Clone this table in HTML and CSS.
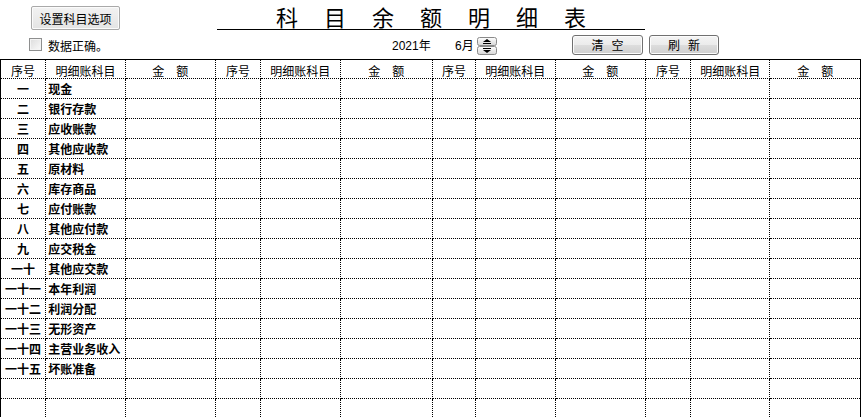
FILE: index.html
```html
<!DOCTYPE html>
<html lang="zh">
<head>
<meta charset="utf-8">
<title>科目余额明细表</title>
<link rel="stylesheet" href="styles.css">
</head>
<body>
<div class="page">
  <div class="top-row">
    <button class="btn-classic">设置科目选项</button>
    <div class="title">科目余额明细表</div>
  </div>
  <div class="second-row">
    <div class="check-wrap"><span class="checkbox"></span><span class="check-label">数据正确。</span></div>
    <div class="year">2021年</div>
    <div class="month">6月</div>
    <div class="spin-cell">
      <span class="spinner">
        <svg width="20" height="18" viewBox="0 0 20 18">
          <defs>
            <linearGradient id="g" x1="0" y1="0" x2="0" y2="1">
              <stop offset="0" stop-color="#ffffff"/>
              <stop offset="1" stop-color="#d6d6d6"/>
            </linearGradient>
          </defs>
          <rect x="0.5" y="0.5" width="19" height="8" rx="2" fill="url(#g)" stroke="#8a8a8a"/>
          <rect x="0.5" y="9.5" width="19" height="8" rx="2" fill="url(#g)" stroke="#8a8a8a"/>
          <path d="M6 5 L10 2 L14 5 Z" fill="#000"/>
          <rect x="6" y="6" width="8" height="1" fill="#000"/>
          <rect x="6" y="11" width="8" height="1" fill="#000"/>
          <path d="M6 13 L10 16 L14 13 Z" fill="#000"/>
        </svg>
      </span>
    </div>
    <div class="btn-cell"><button class="btn-modern btn-clear">清&nbsp;&nbsp;&nbsp;空</button></div>
    <div class="btn-cell"><button class="btn-modern btn-refresh">刷&nbsp;&nbsp;&nbsp;新</button></div>
  </div>
  <table class="grid">
    <colgroup>
      <col class="c-no"><col class="c-name"><col class="c-amt">
      <col class="c-no"><col class="c-name"><col class="c-amt2">
      <col class="c-no2"><col class="c-name"><col class="c-amt">
      <col class="c-no"><col class="c-name"><col class="c-amt">
    </colgroup>
    <thead>
      <tr>
        <th>序号</th><th>明细账科目</th><th>金&emsp;额</th>
        <th>序号</th><th>明细账科目</th><th>金&emsp;额</th>
        <th>序号</th><th>明细账科目</th><th>金&emsp;额</th>
        <th>序号</th><th>明细账科目</th><th>金&emsp;额</th>
      </tr>
    </thead>
    <tbody>
      <tr><td class="no">一</td><td class="name">现金</td><td></td><td></td><td></td><td></td><td></td><td></td><td></td><td></td><td></td><td></td></tr>
      <tr><td class="no">二</td><td class="name">银行存款</td><td></td><td></td><td></td><td></td><td></td><td></td><td></td><td></td><td></td><td></td></tr>
      <tr><td class="no">三</td><td class="name">应收账款</td><td></td><td></td><td></td><td></td><td></td><td></td><td></td><td></td><td></td><td></td></tr>
      <tr><td class="no">四</td><td class="name">其他应收款</td><td></td><td></td><td></td><td></td><td></td><td></td><td></td><td></td><td></td><td></td></tr>
      <tr><td class="no">五</td><td class="name">原材料</td><td></td><td></td><td></td><td></td><td></td><td></td><td></td><td></td><td></td><td></td></tr>
      <tr><td class="no">六</td><td class="name">库存商品</td><td></td><td></td><td></td><td></td><td></td><td></td><td></td><td></td><td></td><td></td></tr>
      <tr><td class="no">七</td><td class="name">应付账款</td><td></td><td></td><td></td><td></td><td></td><td></td><td></td><td></td><td></td><td></td></tr>
      <tr><td class="no">八</td><td class="name">其他应付款</td><td></td><td></td><td></td><td></td><td></td><td></td><td></td><td></td><td></td><td></td></tr>
      <tr><td class="no">九</td><td class="name">应交税金</td><td></td><td></td><td></td><td></td><td></td><td></td><td></td><td></td><td></td><td></td></tr>
      <tr><td class="no">一十</td><td class="name">其他应交款</td><td></td><td></td><td></td><td></td><td></td><td></td><td></td><td></td><td></td><td></td></tr>
      <tr><td class="no">一十一</td><td class="name">本年利润</td><td></td><td></td><td></td><td></td><td></td><td></td><td></td><td></td><td></td><td></td></tr>
      <tr><td class="no">一十二</td><td class="name">利润分配</td><td></td><td></td><td></td><td></td><td></td><td></td><td></td><td></td><td></td><td></td></tr>
      <tr><td class="no">一十三</td><td class="name">无形资产</td><td></td><td></td><td></td><td></td><td></td><td></td><td></td><td></td><td></td><td></td></tr>
      <tr><td class="no">一十四</td><td class="name">主营业务收入</td><td></td><td></td><td></td><td></td><td></td><td></td><td></td><td></td><td></td><td></td></tr>
      <tr><td class="no">一十五</td><td class="name">坏账准备</td><td></td><td></td><td></td><td></td><td></td><td></td><td></td><td></td><td></td><td></td></tr>
      <tr><td></td><td></td><td></td><td></td><td></td><td></td><td></td><td></td><td></td><td></td><td></td><td></td></tr>
      <tr><td></td><td></td><td></td><td></td><td></td><td></td><td></td><td></td><td></td><td></td><td></td><td></td></tr>
      <tr><td></td><td></td><td></td><td></td><td></td><td></td><td></td><td></td><td></td><td></td><td></td><td></td></tr>
    </tbody>
  </table>
</div>
</body>
</html>
```

FILE: styles.css
```css
html, body {
  margin: 0;
  padding: 0;
  background: #ffffff;
  overflow: hidden;
}
body {
  font-family: "Liberation Sans", "Noto Sans CJK SC", sans-serif;
  font-size: 12px;
  color: #000;
}
.page {
  width: 861px;
  height: 417px;
  overflow: hidden;
}
.top-row {
  display: flex;
  align-items: flex-start;
  height: 30px;
}
.btn-classic {
  margin: 6px 0 0 31px;
  width: 89px;
  height: 24px;
  padding: 0;
  font-family: "Noto Sans CJK SC", sans-serif;
  font-size: 12px;
  color: #000;
  background: linear-gradient(#f2f2f2, #e4e4e4);
  border: 1px solid #a9a9a9;
  border-radius: 2px;
  box-shadow: inset 0 0 0 1px #fbfbfb;
}
.title {
  margin-left: 97px;
  width: 428px;
  height: 30px;
  box-sizing: border-box;
  border-bottom: 1px solid #000;
  text-align: center;
  font-family: "Noto Sans CJK SC", sans-serif;
  font-size: 22px;
  line-height: 32px;
  letter-spacing: 26px;
  padding-left: 26px;
  white-space: nowrap;
}
.second-row {
  display: grid;
  grid-template-columns: 392px 63px 22px 95px 77px 1fr;
  align-items: center;
  height: 29px;
}
.check-wrap {
  display: flex;
  align-items: center;
  padding-left: 29px;
}
.checkbox {
  width: 11px;
  height: 11px;
  border: 1px solid #8e8f8f;
  background: linear-gradient(135deg, #dcdcdc, #fafafa);
  box-shadow: inset 0 0 0 1px #f4f4f4;
}
.check-label {
  margin-left: 6px;
  font-family: "Noto Sans CJK SC", sans-serif;
  font-size: 12px;
  line-height: 14px;
  margin-top: 2px;
}
.year, .month {
  font-size: 12px;
  line-height: 14px;
  margin-top: 3px;
}
.spin-cell {
  display: flex;
  align-items: center;
  padding-top: 2px;
}
.spinner {
  display: block;
  width: 20px;
  height: 18px;
}
.spinner svg {
  display: block;
}
.btn-cell {
  display: flex;
  align-items: center;
}
.btn-modern {
  width: 71px;
  height: 20px;
  padding: 0;
  font-family: "Noto Sans CJK SC", sans-serif;
  font-size: 12px;
  line-height: 16px;
  color: #000;
  background: linear-gradient(#f4f4f4 0%, #ebebeb 50%, #dddddd 51%, #cfcfcf 100%);
  border: 1px solid #707070;
  border-radius: 3px;
  box-shadow: inset 0 0 0 1px #fcfcfc;
}
.btn-refresh {
  width: 70px;
}
.grid {
  border-collapse: collapse;
  table-layout: fixed;
  width: 861px;
  border-top: 1px solid #000;
  border-left: 1px solid #000;
  border-right: 1px solid #000;
}
.c-no { width: 45px; }
.c-no2 { width: 43px; }
.c-name { width: 79px; }
.c-amt { width: 90px; }
.c-amt2 { width: 92px; }
.grid th, .grid td {
  border-right: 1px dotted #000;
  border-bottom: 1px dotted #000;
  padding: 0;
  overflow: hidden;
  white-space: nowrap;
}
.grid th:last-child, .grid td:last-child {
  border-right: 1px solid #000;
}
.grid thead tr {
  height: 19px;
}
.grid th {
  font-weight: normal;
  font-family: "Noto Sans CJK SC", sans-serif;
  font-size: 12px;
  line-height: 12px;
  vertical-align: bottom;
  text-align: center;
  padding-bottom: 1px;
}
.grid tbody tr {
  height: 20px;
}
.grid td {
  font-family: "Noto Sans CJK SC", sans-serif;
  font-size: 12px;
  font-weight: bold;
  line-height: 14px;
  vertical-align: middle;
}
.grid td.no {
  text-align: center;
}
.grid td.name {
  text-align: left;
  padding-left: 2px;
}
```
